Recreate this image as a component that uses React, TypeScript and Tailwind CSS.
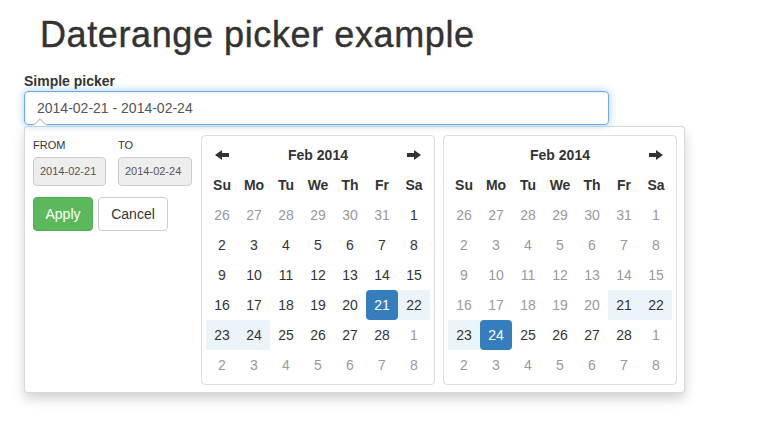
import React from 'react';

type CellState = 'active' | 'range' | 'off' | 'normal';

const weeks = [
  [26, 27, 28, 29, 30, 31, 1],
  [2, 3, 4, 5, 6, 7, 8],
  [9, 10, 11, 12, 13, 14, 15],
  [16, 17, 18, 19, 20, 21, 22],
  [23, 24, 25, 26, 27, 28, 1],
  [2, 3, 4, 5, 6, 7, 8],
];

const dayNames = ['Su', 'Mo', 'Tu', 'We', 'Th', 'Fr', 'Sa'];

const isOffMonth = (r: number, c: number) =>
  (r === 0 && c < 6) || (r === 4 && c === 6) || r === 5;

function Arrow({ dir }: { dir: 'left' | 'right' }) {
  return (
    <svg
      width="14"
      height="10"
      viewBox="0 0 14 10"
      className={dir === 'right' ? 'rotate-180' : ''}
    >
      <polygon points="0,5 7,0 7,10" fill="#333" />
      <rect x="6" y="3" width="8" height="4" fill="#333" />
    </svg>
  );
}

const cellClass: Record<CellState, string> = {
  active: 'bg-[#357ebd] text-white rounded-[4px]',
  range: 'bg-[#ebf4f8] text-[#333]',
  off: 'text-[#999]',
  normal: 'text-[#333]',
};

function Calendar({
  left,
  right,
  getState,
}: {
  left: boolean;
  right: boolean;
  getState: (day: number, off: boolean) => CellState;
}) {
  return (
    <div className="w-[234px] h-[250px] border border-[#ddd] rounded-[4px] p-[4px]">
      <div className="grid grid-cols-7">
        <div className="h-[30px] flex items-center justify-center">
          {left && <Arrow dir="left" />}
        </div>
        <div className="col-span-5 h-[30px] flex items-center justify-center font-bold text-[14px] text-[#333]">
          Feb 2014
        </div>
        <div className="h-[30px] flex items-center justify-center">
          {right && <Arrow dir="right" />}
        </div>
        {dayNames.map((d) => (
          <div
            key={d}
            className="h-[30px] flex items-center justify-center font-bold text-[14px] text-[#333]"
          >
            {d}
          </div>
        ))}
        {weeks.map((week, r) =>
          week.map((day, c) => {
            const state = getState(day, isOffMonth(r, c));
            return (
              <div
                key={`${r}-${c}`}
                className={`h-[30px] flex items-center justify-center text-[14px] ${cellClass[state]}`}
              >
                {day}
              </div>
            );
          })
        )}
      </div>
    </div>
  );
}

export default function App() {
  return (
    <div className="pl-[24px] bg-white min-h-[436px] font-['Liberation_Sans',Arial,sans-serif] text-[#333]">
      <h1 className="ml-[16px] pt-[15px] text-[36px] leading-[40px] font-normal tracking-[0.6px] [-webkit-text-stroke:0.4px_#333]">
        Daterange picker example
      </h1>
      <div className="mt-[16px] text-[14px] leading-[20px] font-bold">
        Simple picker
      </div>
      <div className="relative w-[585px]">
        <div className="h-[34px] border border-[#66afe9] rounded-[4px] px-[12px] flex items-center text-[14px] text-[#555] shadow-[inset_0_1px_1px_rgba(0,0,0,0.075),0_0_8px_rgba(102,175,233,0.6)]">
          2014-02-21 - 2014-02-24
        </div>
        <div className="absolute left-[9px] top-[27px] w-0 h-0 border-x-[7px] border-x-transparent border-b-[7px] border-b-[#ccc]" />
        <div className="absolute left-[10px] top-[29px] w-0 h-0 border-x-[6px] border-x-transparent border-b-[6px] border-b-white z-10" />
      </div>
      <div className="mt-[1px] w-[661px] h-[267px] border border-[rgba(0,0,0,0.15)] rounded-[4px] bg-white shadow-[0_6px_12px_rgba(0,0,0,0.175)] flex">
        <div className="w-[176px] pl-[8px] pt-[10px]">
          <div className="flex gap-[12px]">
            <div>
              <div className="text-[11px] leading-[16px] mb-[4px]">FROM</div>
              <div className="w-[73px] h-[29px] bg-[#eee] border border-[#ccc] rounded-[4px] px-[6px] flex items-center text-[11px] text-[#555]">
                2014-02-21
              </div>
            </div>
            <div>
              <div className="text-[11px] leading-[16px] mb-[4px]">TO</div>
              <div className="w-[74px] h-[29px] bg-[#eee] border border-[#ccc] rounded-[4px] px-[6px] flex items-center text-[11px] text-[#555]">
                2014-02-24
              </div>
            </div>
          </div>
          <div className="mt-[11px] flex gap-[5px]">
            <button className="w-[60px] h-[34px] bg-[#5cb85c] border border-[#4cae4c] rounded-[4px] text-white text-[14px]">
              Apply
            </button>
            <button className="w-[70px] h-[34px] bg-white border border-[#ccc] rounded-[4px] text-[#333] text-[14px]">
              Cancel
            </button>
          </div>
        </div>
        <div className="mt-[8px] flex gap-[8px]">
          <Calendar
            left
            right
            getState={(day, off) =>
              off ? 'off' : day === 21 ? 'active' : day >= 22 && day <= 24 ? 'range' : 'normal'
            }
          />
          <Calendar
            left={false}
            right
            getState={(day, off) =>
              off || day < 21
                ? 'off'
                : day === 24
                ? 'active'
                : day <= 23
                ? 'range'
                : 'normal'
            }
          />
        </div>
      </div>
    </div>
  );
}
